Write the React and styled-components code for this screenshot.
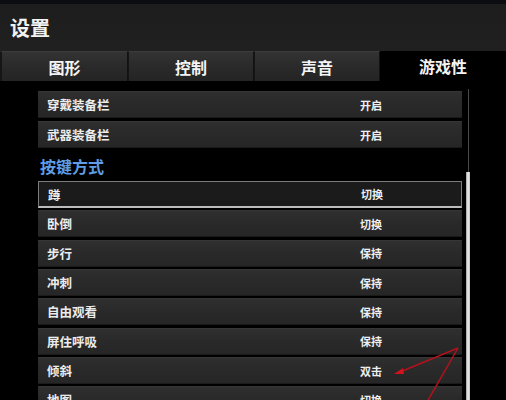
import React from "react";
import styled, { createGlobalStyle } from "styled-components";

const Global = createGlobalStyle`
  html, body { margin: 0; padding: 0; background: #000; }
  body { font-family: "Noto Sans CJK SC", "Noto Sans", sans-serif; }
`;

const Page = styled.div`
  position: relative;
  width: 506px;
  height: 400px;
  overflow: hidden;
  background: #000;
`;

const Header = styled.header`
  height: 51px;
  box-sizing: border-box;
  border-top: 4px solid #0b0d12;
  background: linear-gradient(#1d1d1d, #202020);
  display: flex;
  align-items: center;
  padding: 0 0 1px 10px;
`;

const Title = styled.h1`
  margin: 0;
  font-size: 20px;
  font-weight: 700;
  color: #f2f2f2;
  letter-spacing: 0;
`;

const TabBar = styled.nav`
  display: grid;
  grid-template-columns: 128px 126px 126px 1fr;
  height: 30px;
  background: #111;
`;

const Tab = styled.div`
  display: flex;
  align-items: center;
  justify-content: center;
  font-size: 16px;
  font-weight: 700;
  color: #f4f4f4;
  box-sizing: border-box;
  background: ${(p) =>
    p.$active ? "#000" : "linear-gradient(#333333, #2a2a2a 50%, #242424)"};
  border-left: ${(p) => (p.$active ? "none" : "1px solid #151515")};
  border-top: ${(p) => (p.$active ? "none" : "1px solid #3c3c3c")};
  border-right: ${(p) => (p.$active ? "none" : "1px solid #121212")};
  &:first-child { border-left: 2px solid #161616; }
`;

const Body = styled.div`
  display: flex;
  padding-left: 38px;
  padding-top: 10px;
`;

const List = styled.div`
  width: 424px;
  display: flex;
  flex-direction: column;
`;

const Group = styled.div`
  display: flex;
  flex-direction: column;
  gap: ${(p) => p.$gap}px;
`;

const Row = styled.div`
  position: relative;
  display: grid;
  grid-template-columns: 313px 1fr;
  align-items: center;
  height: 27px;
  flex: none;
  box-sizing: border-box;
  padding-left: 9px;
  background: ${(p) =>
    p.$selected ? "#1b1b1b" : "linear-gradient(#2f2f2f, #2a2a2a 40%, #262626)"};
  border: ${(p) => (p.$selected ? "1px solid #7c7c7c" : "none")};
  border-bottom: ${(p) => (p.$selected ? "2px solid #bdbdbd" : "1px solid #1a1a1a")};
  border-top: ${(p) => (p.$selected ? "1px solid #7c7c7c" : "1px solid #363636")};
`;

const Label = styled.span`
  font-size: 12.5px;
  font-weight: 700;
  color: #ececec;
`;

const Value = styled.span`
  font-size: 11px;
  font-weight: 700;
  color: #efefef;
  justify-self: start;
`;

const SectionTitle = styled.h2`
  margin: 0;
  height: 33px;
  display: flex;
  align-items: center;
  padding: 2px 0 0 2px;
  box-sizing: border-box;
  font-size: 16px;
  font-weight: 700;
  color: #5f9de6;
`;

const ScrollTrack = styled.div`
  margin-left: 3px;
  width: 6px;
  display: flex;
  flex-direction: column;
  align-items: center;
  margin-top: -2px;
`;

const TrackLine = styled.div`
  width: 1px;
  height: 83px;
  background: #4a4a4a;
`;

const Thumb = styled.div`
  width: 4px;
  height: 240px;
  background: linear-gradient(90deg, #9a9a9a, #f2f2f2 50%, #bcbcbc);
`;

const Annotation = styled.svg`
  position: absolute;
  left: 0;
  top: 0;
  pointer-events: none;
`;

const topRows = [
  ["穿戴装备栏", "开启"],
  ["武器装备栏", "开启"],
];

const keyRows = [
  ["蹲", "切换"],
  ["卧倒", "切换"],
  ["步行", "保持"],
  ["冲刺", "保持"],
  ["自由观看", "保持"],
  ["屏住呼吸", "保持"],
  ["倾斜", "双击"],
  ["地图", "切换"],
];

export default function App() {
  return (
    <Page>
      <Global />
      <Header>
        <Title>设置</Title>
      </Header>
      <TabBar>
        <Tab>图形</Tab>
        <Tab>控制</Tab>
        <Tab>声音</Tab>
        <Tab $active>游戏性</Tab>
      </TabBar>
      <Body>
        <List>
          <Group $gap={3}>
            {topRows.map(([l, v]) => (
              <Row key={l}>
                <Label>{l}</Label>
                <Value>{v}</Value>
              </Row>
            ))}
          </Group>
          <SectionTitle>按键方式</SectionTitle>
          <Group $gap={2.35}>
            {keyRows.map(([l, v], i) => (
              <Row key={l} $selected={i === 0}>
                <Label>{l}</Label>
                <Value>{v}</Value>
              </Row>
            ))}
          </Group>
        </List>
        <ScrollTrack>
          <TrackLine />
          <Thumb />
        </ScrollTrack>
      </Body>
      <Annotation width="506" height="400" viewBox="0 0 506 400">
        <line x1="458" y1="348" x2="400" y2="372" stroke="#b3121c" strokeWidth="1.5" />
        <line x1="458" y1="348" x2="427" y2="402" stroke="#b3121c" strokeWidth="1.5" />
        <polygon points="394,374 403,368 404,374" fill="#d0141e" />
      </Annotation>
    </Page>
  );
}
